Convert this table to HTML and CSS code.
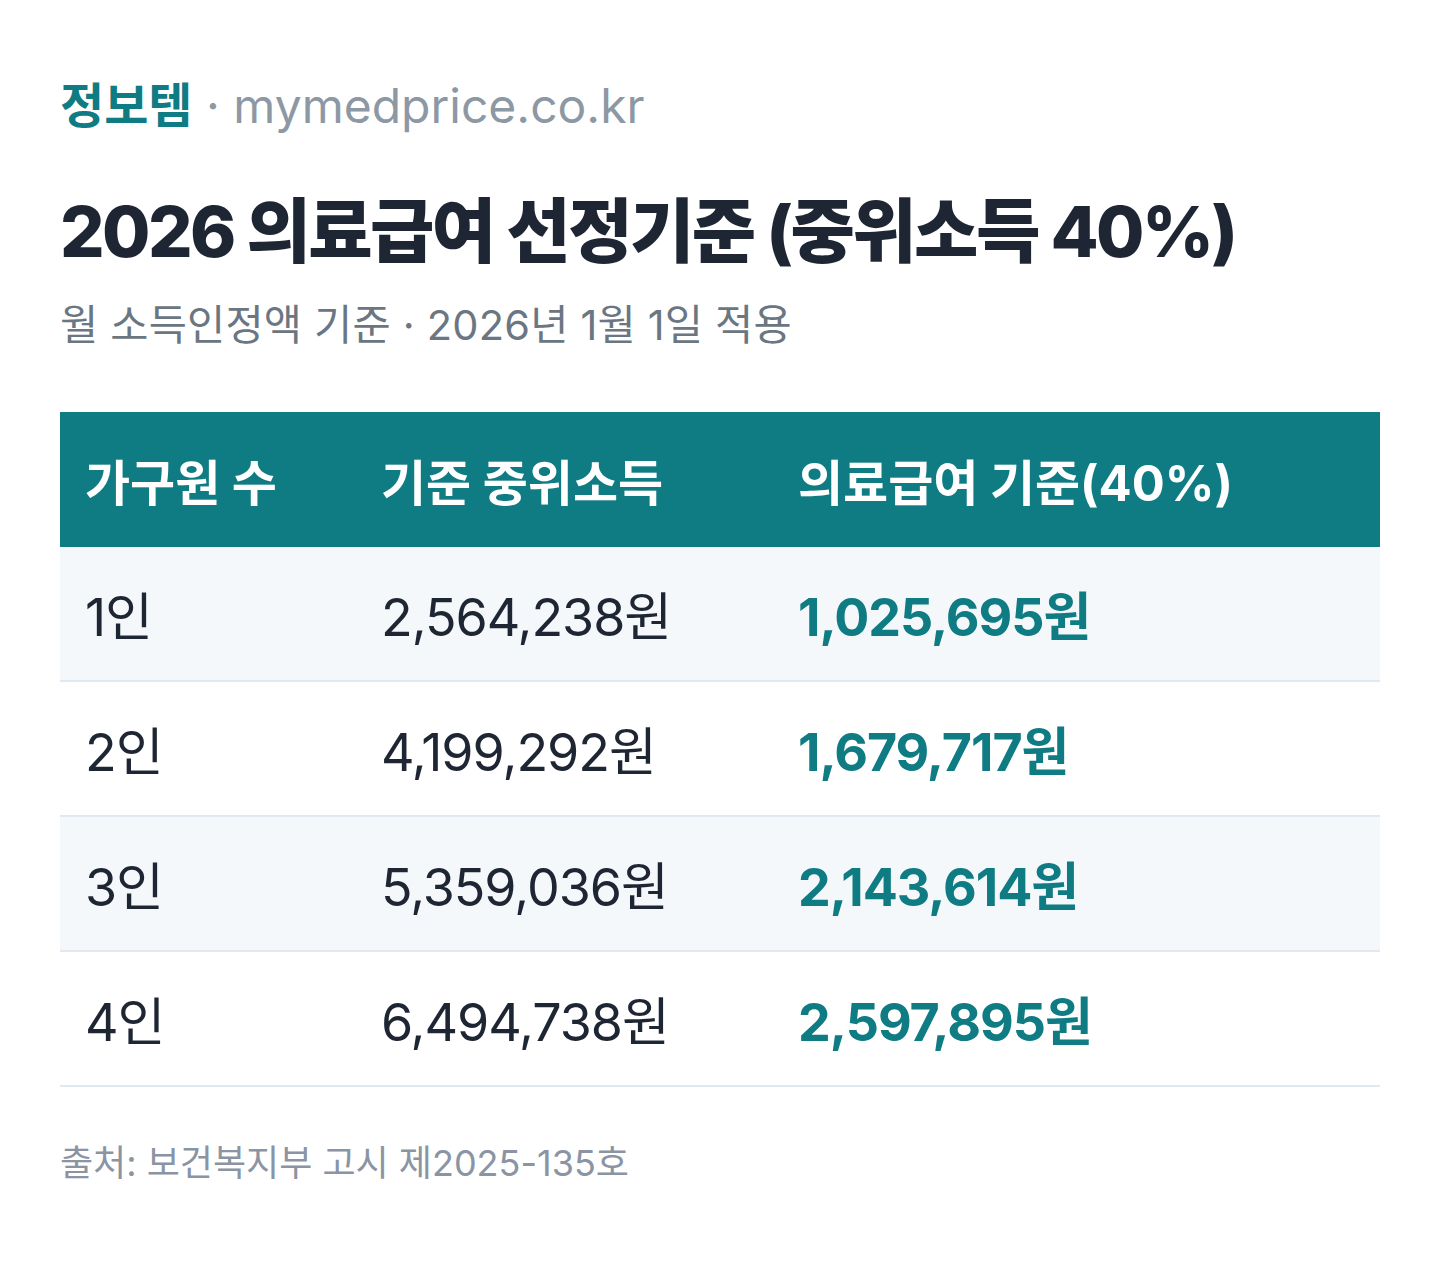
FILE: index.html
```html
<!DOCTYPE html>
<html lang="ko">
<head>
<meta charset="utf-8">
<title>2026 의료급여 선정기준</title>
<link rel="stylesheet" href="styles.css">
</head>
<body>
<div class="page">
  <div class="brand"><span class="brand-name">정보템</span> · mymedprice.co.kr</div>
  <h1 class="title">2026 의료급여 선정기준 (중위소득 40%)</h1>
  <p class="subtitle">월 소득인정액 기준 · 2026년 1월 1일 적용</p>
  <table class="table">
    <thead>
      <tr>
        <th class="c1">가구원 수</th>
        <th class="c2">기준 중위소득</th>
        <th class="c3">의료급여 기준(40%)</th>
      </tr>
    </thead>
    <tbody>
      <tr class="alt"><td>1인</td><td>2,564,238원</td><td class="hl">1,025,695원</td></tr>
      <tr><td>2인</td><td>4,199,292원</td><td class="hl">1,679,717원</td></tr>
      <tr class="alt"><td>3인</td><td>5,359,036원</td><td class="hl">2,143,614원</td></tr>
      <tr><td>4인</td><td>6,494,738원</td><td class="hl">2,597,895원</td></tr>
    </tbody>
  </table>
  <p class="source">출처: 보건복지부 고시 제2025-135호</p>
</div>
</body>
</html>
```
FILE: styles.css
```css
html, body {
  margin: 0;
  padding: 0;
  background: #ffffff;
}
.page {
  padding: 78px 60px 60px;
  font-family: Inter, "Noto Sans CJK KR", sans-serif;
  color: #1e2533;
}
.brand {
  font-size: 48px;
  line-height: 55px;
  color: #8d98a5;
}
.brand-name {
  color: #0f7b83;
  font-weight: 700;
}
.title {
  margin: 56px 0 0;
  font-size: 70px;
  line-height: 86px;
  font-weight: 800;
  letter-spacing: -0.037em;
  color: #1e2533;
}
.subtitle {
  margin: 24px 0 0;
  font-size: 41.5px;
  line-height: 52px;
  letter-spacing: 0.005em;
  color: #6b7683;
}
.table {
  margin-top: 61px;
  width: 100%;
  border-collapse: collapse;
  table-layout: fixed;
}
.table th {
  background: #0f7b83;
  color: #ffffff;
  font-size: 49px;
  font-weight: 700;
  text-align: left;
  height: 135px;
  padding: 0 0 0 25px;
}
.table .c1 { width: 271px; }
.table .c2 { width: 392px; }
.table td {
  height: 133px;
  padding: 0 0 0 25px;
  font-size: 52px;
  border-bottom: 2px solid #e2e8f0;
  color: #1e2533;
  letter-spacing: -0.02em;
}
.table tr.alt td {
  background: #f5f8fb;
}
.table td.hl {
  color: #0f7b83;
  font-weight: 700;
}
.source {
  margin: 53px 0 0;
  font-size: 36px;
  line-height: 46px;
  color: #8a94a3;
}
```
